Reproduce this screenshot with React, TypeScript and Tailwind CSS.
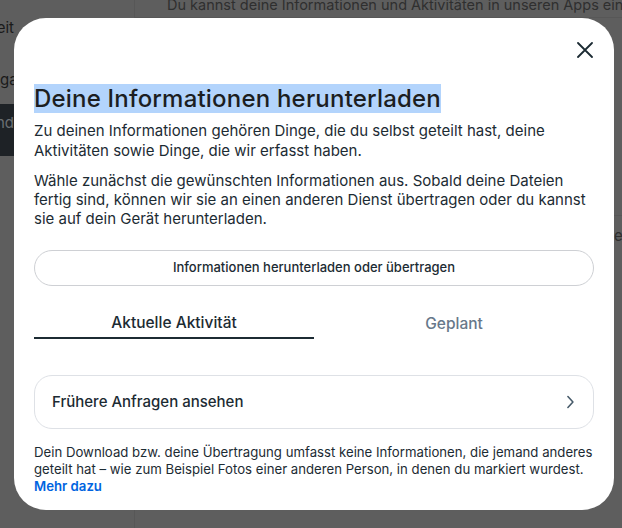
const App = () => {
  return (
    <div
      className="relative w-[622px] h-[528px] overflow-hidden bg-[#5e5e5e] text-[#1c2b33]"
      style={{ fontFamily: 'Inter, "Liberation Sans", sans-serif' }}
    >
      {/* Page behind the dialog */}
      <div className="flex h-full">
        <aside className="w-[135px] shrink-0 border-r border-[#575757] flex flex-col overflow-hidden">
          <div className="h-[56px] w-[14px] flex items-center justify-end text-[15px] text-[#1a1a1a] whitespace-nowrap">
            Aktivitätszeit
          </div>
          <div className="h-[48px] flex items-center text-[15px] text-[#1a1a1a] whitespace-nowrap">
            gang
          </div>
          <div className="h-[52px] bg-[#1e2226] flex items-start pt-[8px] text-[15px] text-[#6b6f73] whitespace-nowrap">
            <div className="w-[14px] flex justify-end">Hintergrund</div>
          </div>
        </aside>
        <main className="flex-1 flex flex-col">
          <p className="-mt-[6px] pl-[32px] h-[24px] text-[14.5px] text-[#2f2f2f] whitespace-nowrap border-b border-[#575757]">
            Du kannst deine Informationen und Aktivitäten in unseren Apps einsehen,
          </p>
          <div className="mt-[197px] border-t border-[#575757] pt-[10px] pl-[479px] text-[15px] leading-[20px] text-[#2f2f2f] whitespace-nowrap">
            er
          </div>
        </main>
      </div>

      {/* Dialog */}
      <div className="absolute left-[14px] top-[18px] w-[600px] h-[492px] bg-white rounded-[32px] px-[20px] pt-[20px]">
        <div className="flex justify-end items-center h-[24px] pr-[1px]">
          <svg width="16" height="16" viewBox="0 0 16 16" fill="none" stroke="#1c2b33" strokeWidth="1.8" strokeLinecap="round">
            <path d="M1 1L15 15M15 1L1 15" />
          </svg>
        </div>

        <h1 className="mt-[22px] text-[24px] leading-[29px] font-medium tracking-[0.2px] text-[#1c1e21]">
          <span className="inline-block bg-[#b3d4fc]">Deine Informationen herunterladen</span>
        </h1>

        <p className="mt-[8px] text-[15px] leading-[20px] whitespace-nowrap">
          <span className="block">Zu deinen Informationen gehören Dinge, die du selbst geteilt hast, deine</span>
          <span className="block">Aktivitäten sowie Dinge, die wir erfasst haben.</span>
        </p>
        <p className="mt-[10px] text-[15px] leading-[19px] whitespace-nowrap">
          <span className="block">Wähle zunächst die gewünschten Informationen aus. Sobald deine Dateien</span>
          <span className="block">fertig sind, können wir sie an einen anderen Dienst übertragen oder du kannst</span>
          <span className="block">sie auf dein Gerät herunterladen.</span>
        </p>

        <button className="mt-[22px] w-full h-[36px] rounded-full border border-[#ced0d4] bg-white text-[13px] font-medium text-[#1c2b33] flex items-center justify-center">
          Informationen herunterladen oder übertragen
        </button>

        <div className="mt-[16px] flex">
          <div className="flex-1 h-[37px] flex items-center justify-center border-b-2 border-[#1c2b33] text-[15.5px] font-medium pt-[7px]">
            Aktuelle Aktivität
          </div>
          <div className="flex-1 h-[37px] flex items-center justify-center text-[15.5px] font-medium text-[#67788a] pt-[7px]">
            Geplant
          </div>
        </div>

        <div className="mt-[36px] h-[54px] rounded-[18px] border border-[#dee1e6] flex items-center justify-between pl-[17px] pr-[13px]">
          <span className="text-[15px] font-medium">Frühere Anfragen ansehen</span>
          <svg width="20" height="20" viewBox="0 0 24 24" fill="none" stroke="#465a69" strokeWidth="1.9" strokeLinecap="round" strokeLinejoin="round">
            <path d="M9.5 5.5L15.5 12L9.5 18.5" />
          </svg>
        </div>

        <p className="mt-[15px] text-[13.2px] leading-[17px] whitespace-nowrap">
          <span className="block">Dein Download bzw. deine Übertragung umfasst keine Informationen, die jemand anderes</span>
          <span className="block">geteilt hat – wie zum Beispiel Fotos einer anderen Person, in denen du markiert wurdest.</span>
          <a className="block font-semibold text-[#0064e0]">Mehr dazu</a>
        </p>
      </div>
    </div>
  );
};

export default App;
